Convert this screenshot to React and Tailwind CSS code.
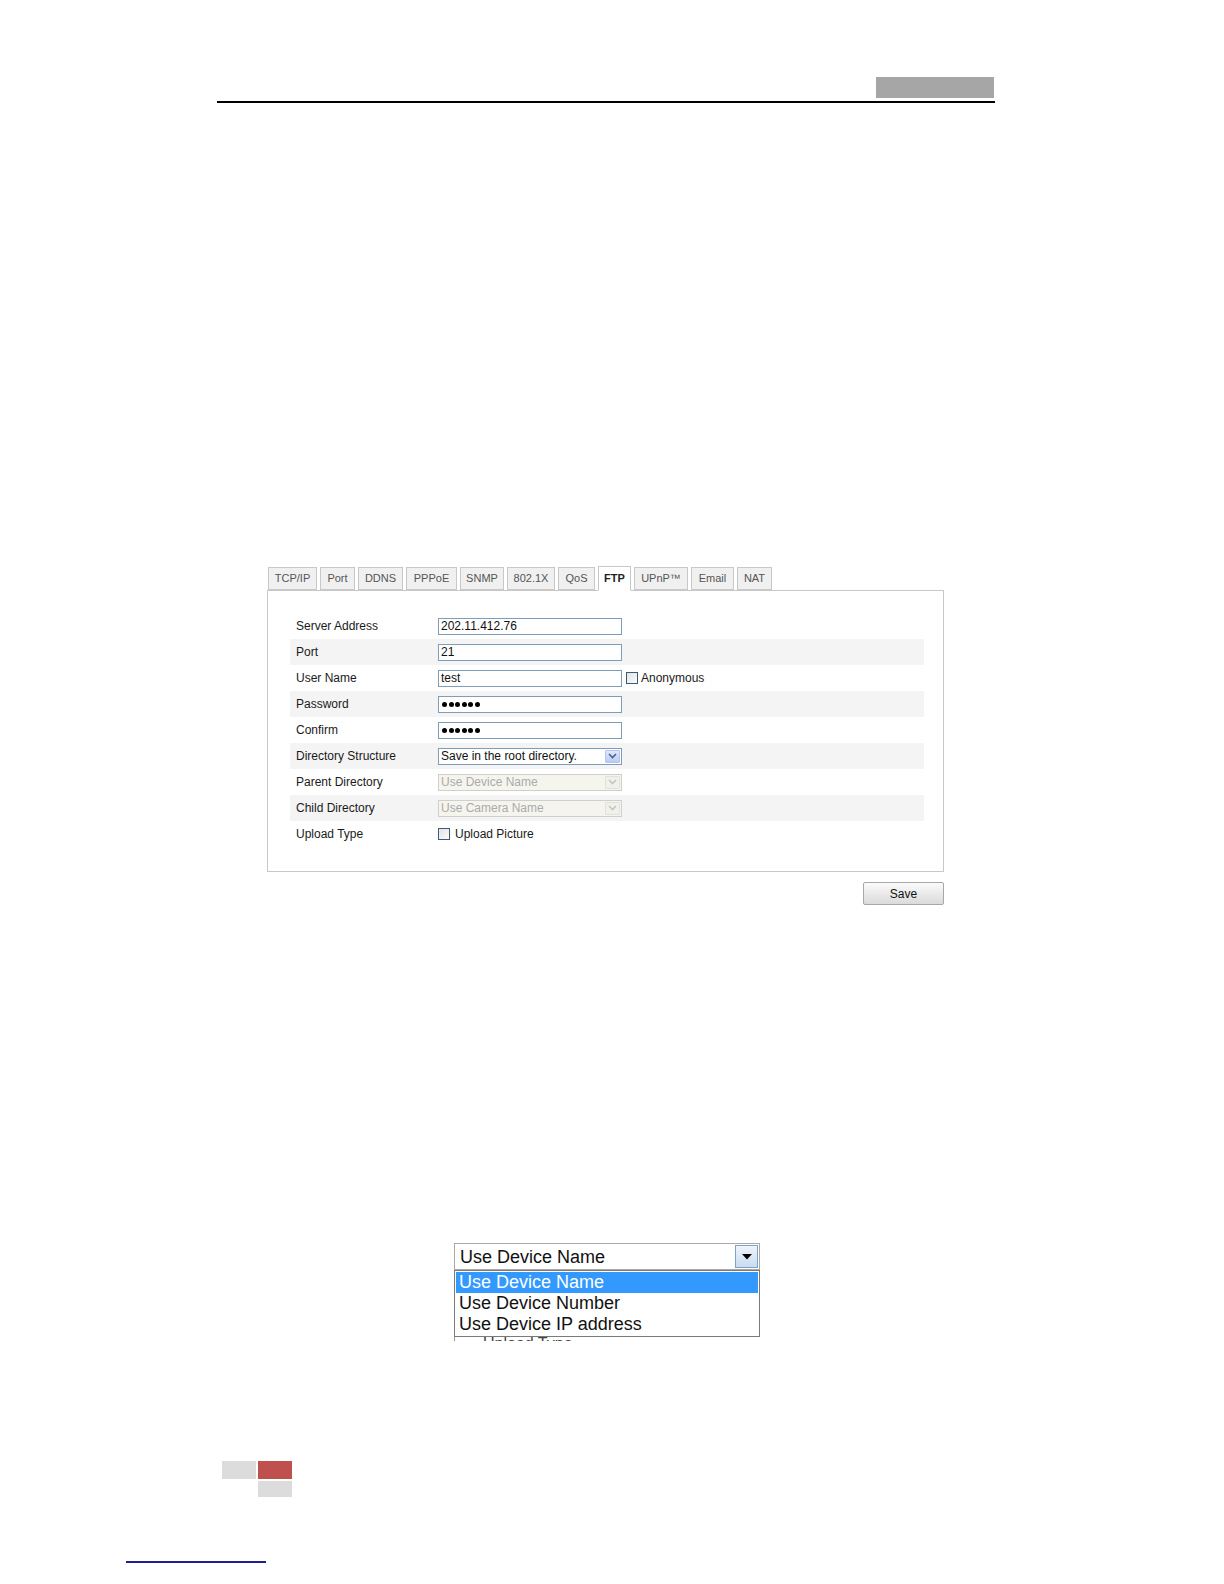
const tabs = [
  { label: "TCP/IP", w: "w-[49px]" },
  { label: "Port", w: "w-[35px]" },
  { label: "DDNS", w: "w-[45px]" },
  { label: "PPPoE", w: "w-[51px]" },
  { label: "SNMP", w: "w-[44px]" },
  { label: "802.1X", w: "w-[48px]" },
  { label: "QoS", w: "w-[37px]" },
  { label: "FTP", w: "w-[33px]", active: true },
  { label: "UPnP™", w: "w-[54px]" },
  { label: "Email", w: "w-[43px]" },
  { label: "NAT", w: "w-[35px]" },
];

function Chevron({ disabled }) {
  return (
    <svg width="9" height="6" viewBox="0 0 9 6">
      <path
        d="M1 1 L4.5 4.5 L8 1"
        fill="none"
        stroke={disabled ? "#c4c4c4" : "#4d6185"}
        strokeWidth="1.6"
      />
    </svg>
  );
}

function TextInput({ value }) {
  return (
    <div className="w-[184px] h-[17px] border border-[#7f9db9] bg-white px-[2px] flex items-center text-[12px] text-[#111] leading-none">
      {value}
    </div>
  );
}

function Dots() {
  return (
    <div className="w-[184px] h-[17px] border border-[#7f9db9] bg-white px-[3px] flex items-center gap-[1.5px]">
      {[0, 1, 2, 3, 4, 5].map((i) => (
        <span key={i} className="w-[5px] h-[5px] rounded-full bg-black" />
      ))}
    </div>
  );
}

function Select({ value, disabled }) {
  return (
    <div
      className={
        "w-[184px] h-[17px] border flex items-center justify-between pl-[2px] pr-[1px] text-[12px] leading-none " +
        (disabled
          ? "border-[#cfcfcf] bg-[#f5f5ee] text-[#ababab]"
          : "border-[#7f9db9] bg-white text-[#111]")
      }
    >
      <span>{value}</span>
      <span
        className={
          "w-[15px] h-[13px] flex items-center justify-center rounded-[1px] " +
          (disabled
            ? "bg-[#f1f1ec] border border-[#e2e2dc]"
            : "bg-gradient-to-b from-[#dfe8fc] to-[#b9cbf7] border border-[#b3c6ef]")
        }
      >
        <Chevron disabled={disabled} />
      </span>
    </div>
  );
}

function Checkbox() {
  return (
    <span className="w-[12px] h-[12px] border border-[#3c5a7a] bg-gradient-to-br from-[#e4e4e4] to-[#fbfbfb] inline-block" />
  );
}

function FormRow({ label, striped, children }) {
  return (
    <div
      className={
        "h-[26px] flex items-center rounded-[2px] " +
        (striped ? "bg-[#f4f4f4]" : "")
      }
    >
      <div className="w-[148px] pl-[6px] text-[12px] text-[#1a1a1a]">{label}</div>
      {children}
    </div>
  );
}

export default function App() {
  return (
    <div
      className="w-[1224px] h-[1584px] bg-white flex flex-col"
      style={{ fontFamily: '"Liberation Sans", Arial, sans-serif' }}
    >
      {/* page header */}
      <div className="ml-[217px] w-[778px] pt-[77px]">
        <div className="flex justify-end">
          <div className="w-[118px] h-[21px] bg-[#a6a6a6] mr-[1px]" />
        </div>
        <div className="mt-[3px] h-[2px] bg-black" />
      </div>

      {/* FTP settings screenshot */}
      <div className="ml-[267px] mt-[463px] w-[677px]">
        <div className="flex items-end gap-[3px] pl-[1px] h-[24px]">
          {tabs.map((t) => (
            <div
              key={t.label}
              className={
                t.w +
                " flex items-center justify-center text-[11px] border border-[#c8c8c8] " +
                (t.active
                  ? "h-[25px] -mb-[1px] bg-white border-b-white text-[#222] font-bold relative z-10"
                  : "h-[23px] bg-[#f0f0f0] text-[#555]")
              }
            >
              {t.label}
            </div>
          ))}
        </div>
        <div className="border border-[#c8c8c8] h-[282px] pt-[22px] pl-[22px] pr-[19px]">
          <FormRow label="Server Address">
            <TextInput value="202.11.412.76" />
          </FormRow>
          <FormRow label="Port" striped>
            <TextInput value="21" />
          </FormRow>
          <FormRow label="User Name">
            <TextInput value="test" />
            <div className="ml-[4px] flex items-center gap-[3px] text-[12px] text-[#1a1a1a]">
              <Checkbox />
              <span>Anonymous</span>
            </div>
          </FormRow>
          <FormRow label="Password" striped>
            <Dots />
          </FormRow>
          <FormRow label="Confirm">
            <Dots />
          </FormRow>
          <FormRow label="Directory Structure" striped>
            <Select value="Save in the root directory." />
          </FormRow>
          <FormRow label="Parent Directory">
            <Select value="Use Device Name" disabled />
          </FormRow>
          <FormRow label="Child Directory" striped>
            <Select value="Use Camera Name" disabled />
          </FormRow>
          <FormRow label="Upload Type">
            <div className="flex items-center gap-[5px] text-[12px] text-[#1a1a1a]">
              <Checkbox />
              <span>Upload Picture</span>
            </div>
          </FormRow>
        </div>
        <div className="flex justify-end mt-[10px]">
          <button className="w-[81px] h-[23px] border border-[#a7a7a7] rounded-[2px] bg-gradient-to-b from-[#fbfbfb] to-[#dadada] text-[12px] text-[#111]">
            Save
          </button>
        </div>
      </div>

      {/* dropdown screenshot */}
      <div className="ml-[454px] mt-[338px] w-[306px]">
        <div className="h-[27px] border border-[#a9a9a9] flex items-center justify-between pl-[5px] pr-[1px]">
          <span className="text-[18px] text-[#111] leading-none">Use Device Name</span>
          <span className="w-[23px] h-[23px] border border-[#7fa3c8] bg-gradient-to-b from-[#eef4fb] to-[#c9dcf0] flex items-center justify-center">
            <svg width="10" height="6" viewBox="0 0 10 6">
              <path d="M0 0 H10 L5 5.5 Z" fill="#000" />
            </svg>
          </span>
        </div>
        <div className="border border-[#7a7a7a] p-[1px] text-[18px] leading-[21px]">
          <div className="bg-[#3399ff] text-white pl-[3px]">Use Device Name</div>
          <div className="text-[#111] pl-[3px]">Use Device Number</div>
          <div className="text-[#111] pl-[3px]">Use Device IP address</div>
        </div>
        <div className="h-[4px] overflow-hidden pl-[28px] border-l border-[#9a9a9a]">
          <div className="text-[16px] text-[#444] leading-[14px]">Upload Type</div>
        </div>
      </div>

      {/* page footer marks */}
      <div className="ml-[222px] mt-[120px] grid grid-cols-[34px_34px] gap-x-[2px] gap-y-[2px]">
        <div className="h-[18px] bg-[#dcdcdc]" />
        <div className="h-[18px] bg-[#c0504d]" />
        <div />
        <div className="h-[16px] bg-[#dcdcdc]" />
      </div>

      <div className="ml-[126px] mt-[64px] w-[140px] h-[2px] bg-[#1f1f8f]" />
    </div>
  );
}
